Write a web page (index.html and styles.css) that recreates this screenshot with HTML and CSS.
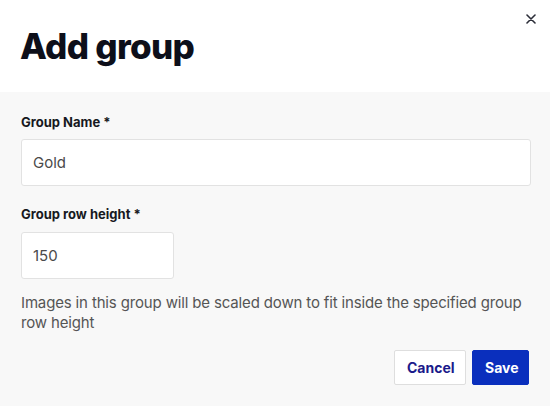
FILE: index.html
```html
<!DOCTYPE html>
<html lang="en">
<head>
<meta charset="utf-8">
<title>Add group</title>
<link rel="stylesheet" href="styles.css">
</head>
<body>
<div class="modal">
  <header class="modal-header">
    <h1 class="modal-title">Add group</h1>
    <button class="close-btn" aria-label="Close">
      <svg width="10" height="10" viewBox="0 0 10 10"><path d="M1 1L9 9M9 1L1 9" stroke="#2b2d38" stroke-width="1.6" stroke-linecap="round"/></svg>
    </button>
  </header>
  <form class="modal-body">
    <div class="field">
      <label class="label">Group Name *</label>
      <input class="input input-wide" type="text" value="Gold">
    </div>
    <div class="field">
      <label class="label">Group row height *</label>
      <input class="input input-narrow" type="text" value="150">
    </div>
    <p class="help">Images in this group will be scaled down to fit inside the specified group row height</p>
    <div class="actions">
      <button type="button" class="btn btn-secondary">Cancel</button>
      <button type="button" class="btn btn-primary">Save</button>
    </div>
  </form>
</div>
</body>
</html>
```

FILE: styles.css
```css
* { box-sizing: border-box; }
html, body { margin: 0; padding: 0; }
body {
  font-family: Inter, "Noto Sans", sans-serif;
  background: #f8f8f8;
  width: 550px;
  height: 406px;
  overflow: hidden;
}
.modal { display: flex; flex-direction: column; height: 406px; }
.modal-header {
  position: relative;
  background: #ffffff;
  height: 92px;
  padding: 24px 20px 0 20px;
}
.modal-title {
  margin: 0;
  font-size: 35px;
  line-height: 44px;
  font-weight: 800;
  color: #0d0f1a;
  letter-spacing: -0.7px;
}
.close-btn {
  position: absolute;
  top: 12px;
  right: 12px;
  width: 14px;
  height: 14px;
  padding: 0;
  border: none;
  background: none;
  display: flex;
  align-items: center;
  justify-content: center;
}
.modal-body {
  flex: 1;
  background: #f8f8f8;
  padding: 22px 20px 21px 21px;
  display: flex;
  flex-direction: column;
}
.field { display: flex; flex-direction: column; align-items: flex-start; margin-bottom: 20px; }
.field + .field { margin-bottom: 14px; }
.field + .field .label { margin-bottom: 10px; }
.label {
  font-size: 13px;
  line-height: 16px;
  font-weight: 700;
  color: #161821;
  margin-bottom: 9px;
}
.input {
  height: 47px;
  border: 1px solid #e2e2e2;
  border-radius: 3px;
  background: #fff;
  padding: 0 11px;
  font-family: inherit;
  font-size: 15px;
  color: #4a4a4a;
  outline: none;
}
.input-wide { width: 510px; }
.input-narrow { width: 153px; }
.help {
  margin: 0;
  font-size: 15px;
  line-height: 20px;
  color: #555555;
  letter-spacing: -0.15px;
  margin-right: -4px;
}
.actions {
  margin-top: auto;
  display: flex;
  justify-content: flex-end;
  gap: 6px;
  padding-right: 1px;
}
.btn {
  height: 35px;
  border-radius: 2px;
  font-family: inherit;
  font-size: 14px;
  font-weight: 700;
  padding: 0 12px;
}
.btn-secondary {
  width: 72px;
  background: #fff;
  border: 1px solid #dedede;
  color: #1a1a8a;
}
.btn-primary {
  width: 57px;
  background: #0a2fbd;
  border: 1px solid #0a2fbd;
  color: #fff;
}
```
